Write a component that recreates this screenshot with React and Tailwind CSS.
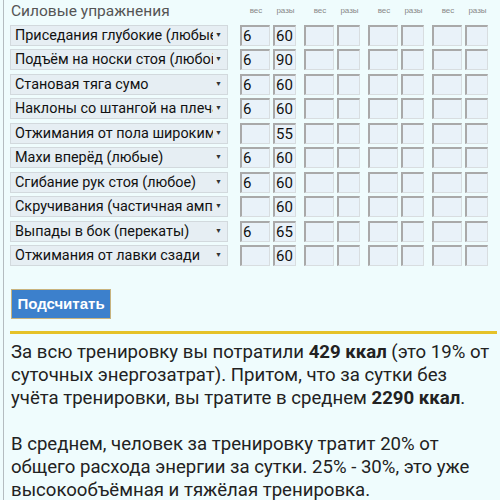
const rows = [
  { name: "Приседания глубокие (любые)", w: "6", r: "60" },
  { name: "Подъём на носки стоя (любой)", w: "6", r: "90" },
  { name: "Становая тяга сумо", w: "6", r: "60" },
  { name: "Наклоны со штангой на плечах", w: "6", r: "60" },
  { name: "Отжимания от пола широким хватом", w: "", r: "55" },
  { name: "Махи вперёд (любые)", w: "6", r: "60" },
  { name: "Сгибание рук стоя (любое)", w: "6", r: "60" },
  { name: "Скручивания (частичная амплитуда)", w: "", r: "60" },
  { name: "Выпады в бок (перекаты)", w: "6", r: "65" },
  { name: "Отжимания от лавки сзади", w: "", r: "60" },
];

function Box({ value, wide }) {
  return (
    <div
      className={`${wide ? "w-[30px]" : "w-[23px]"} h-[21px] bg-[#e9f2f9] border-t-2 border-l-2 border-t-[#a9a9a9] border-l-[#a9a9a9] border-r border-b border-r-[#d8dde0] border-b-[#d8dde0] pl-[1px] text-[15px] leading-[19px] text-[#111]`}
    >
      {value}
    </div>
  );
}

function Group({ w, r }) {
  return (
    <div className="flex gap-[3px]">
      <Box wide value={w} />
      <Box value={r} />
    </div>
  );
}

function Head() {
  return (
    <div className="flex gap-[3px] text-[8px] text-[#888] font-['Liberation_Sans',sans-serif]">
      <div className="w-[30px] text-center">вес</div>
      <div className="w-[23px] text-center">разы</div>
    </div>
  );
}

export default function App() {
  return (
    <div className="w-[500px] h-[500px] bg-[#effcfd] overflow-hidden font-['Roboto',sans-serif]">
      <div className="ml-[3px] h-full border-l border-[#b4bcc0] pl-[6px]">
        <div className="flex h-[25px] items-center">
          <div className="w-[230px] text-[15.5px] text-[#555] pl-[1px] -mt-[2px]">Силовые упражнения</div>
          <div className="ml-[1px] flex gap-[8px] -mt-[3px]">
            <Head />
            <Head />
            <Head />
            <Head />
          </div>
        </div>
        <div className="flex flex-col gap-[3.45px]">
          {rows.map((row) => (
            <div key={row.name} className="flex items-center">
              <div className="relative w-[218px] h-[21px] bg-[#e6eef3] border border-[#d2d9dd] pl-[4px] pr-[14px] overflow-hidden">
                <div className="whitespace-nowrap overflow-hidden text-[14.4px] leading-[19px] text-[#111]">{row.name}</div>
                <span className="absolute right-[5px] top-[4px] text-[7px] text-[#333]">▼</span>
              </div>
              <div className="ml-[12px] flex gap-[8px]">
                <Group w={row.w} r={row.r} />
                <Group w="" r="" />
                <Group w="" r="" />
                <Group w="" r="" />
              </div>
            </div>
          ))}
        </div>
        <button className="mt-[23px] ml-[1px] w-[100px] h-[30px] bg-[#3c80cc] border border-[#c8b37e] text-white font-bold text-[15px] font-['Liberation_Sans',sans-serif]">
          Подсчитать
        </button>
        <div className="mt-[12px] mr-[3px] h-[3px] bg-[#e5c229]" />
        <div className="mt-[7px] text-[18.6px] leading-[23px] text-[#222] pl-[1px] pr-[4px]">
          <p>
            За всю тренировку вы потратили <b>429 ккал</b> (это 19% от суточных энергозатрат). Притом, что за сутки без учёта тренировки, вы тратите в среднем <b>2290 ккал</b>.
          </p>
          <p className="mt-[23px]">
            В среднем, человек за тренировку тратит 20% от общего расхода энергии за сутки. 25% - 30%, это уже высокообъёмная и тяжёлая тренировка.
          </p>
        </div>
      </div>
    </div>
  );
}
